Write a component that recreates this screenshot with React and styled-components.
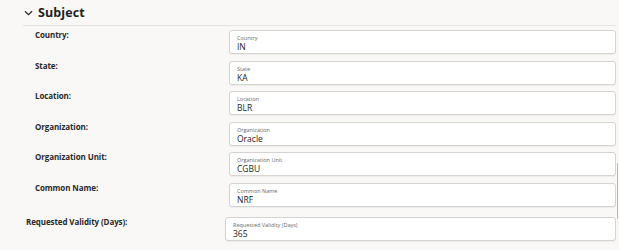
import React from "react";
import styled, { createGlobalStyle } from "styled-components";

const GlobalStyle = createGlobalStyle`
  html, body {
    margin: 0;
    padding: 0;
    background: #f9f8f6;
    font-family: "Open Sans", "Noto Sans", sans-serif;
    color: #1f1f1f;
    overflow: hidden;
  }
`;

const Page = styled.div`
  position: relative;
  width: 619px;
  height: 250px;
  padding: 0 3px 0 23px;
  box-sizing: border-box;
`;

const Header = styled.div`
  display: flex;
  align-items: center;
  gap: 5px;
  height: 25px;
  border-bottom: 1px solid #e6e4e1;
  padding-left: 1px;
`;

const Title = styled.h2`
  margin: 0;
  font-size: 12.5px;
  font-weight: 700;
  color: #1f1f1f;
  letter-spacing: 0.1px;
`;

const Rows = styled.div`
  display: flex;
  flex-direction: column;
  gap: 6.5px;
  padding-top: 4px;
`;

const Row = styled.div`
  display: grid;
  grid-template-columns: ${(p) => (p.$wide ? "199px" : "194px")} 1fr;
  margin-left: ${(p) => (p.$wide ? "3px" : "12px")};
  margin-top: ${(p) => (p.$wide ? "4px" : "0")};
`;

const Label = styled.div`
  font-size: 8px;
  line-height: 9px;
  font-weight: 700;
  color: #2a2a2a;
  padding-top: 0;
  letter-spacing: -0.1px;
`;

const Field = styled.div`
  height: 24px;
  box-sizing: border-box;
  border: 1px solid #d6d4d1;
  border-radius: 3px;
  background: #fff;
  padding: 3px 0 0 7px;
  display: flex;
  flex-direction: column;
  box-shadow: 0 1px 1px rgba(0, 0, 0, 0.05);
`;

const FieldLabel = styled.span`
  font-size: 5.5px;
  line-height: 8px;
  color: #6b6b6b;
`;

const FieldValue = styled.span`
  font-size: 8.5px;
  line-height: 10px;
  color: #1f1f1f;
`;

const Scrollbar = styled.div`
  position: absolute;
  right: 1px;
  top: 163px;
  width: 1.5px;
  height: 56px;
  background: #b9b8b6;
  border-radius: 1px;
`;

const Chevron = () => (
  <svg width="9" height="6" viewBox="0 0 9 6">
    <path d="M1 1.2 L4.5 4.6 L8 1.2" fill="none" stroke="#2a2a2a" strokeWidth="1.3" />
  </svg>
);

const fields = [
  ["Country", "IN"],
  ["State", "KA"],
  ["Location", "BLR"],
  ["Organization", "Oracle"],
  ["Organization Unit", "CGBU"],
  ["Common Name", "NRF"],
];

export default function App() {
  return (
    <Page>
      <GlobalStyle />
      <Header>
        <Chevron />
        <Title>Subject</Title>
      </Header>
      <Rows>
        {fields.map(([name, value]) => (
          <Row key={name}>
            <Label>{name}:</Label>
            <Field>
              <FieldLabel>{name}</FieldLabel>
              <FieldValue>{value}</FieldValue>
            </Field>
          </Row>
        ))}
        <Row $wide>
          <Label>Requested Validity (Days):</Label>
          <Field>
            <FieldLabel>Requested Validity (Days)</FieldLabel>
            <FieldValue>365</FieldValue>
          </Field>
        </Row>
      </Rows>
      <Scrollbar />
    </Page>
  );
}
